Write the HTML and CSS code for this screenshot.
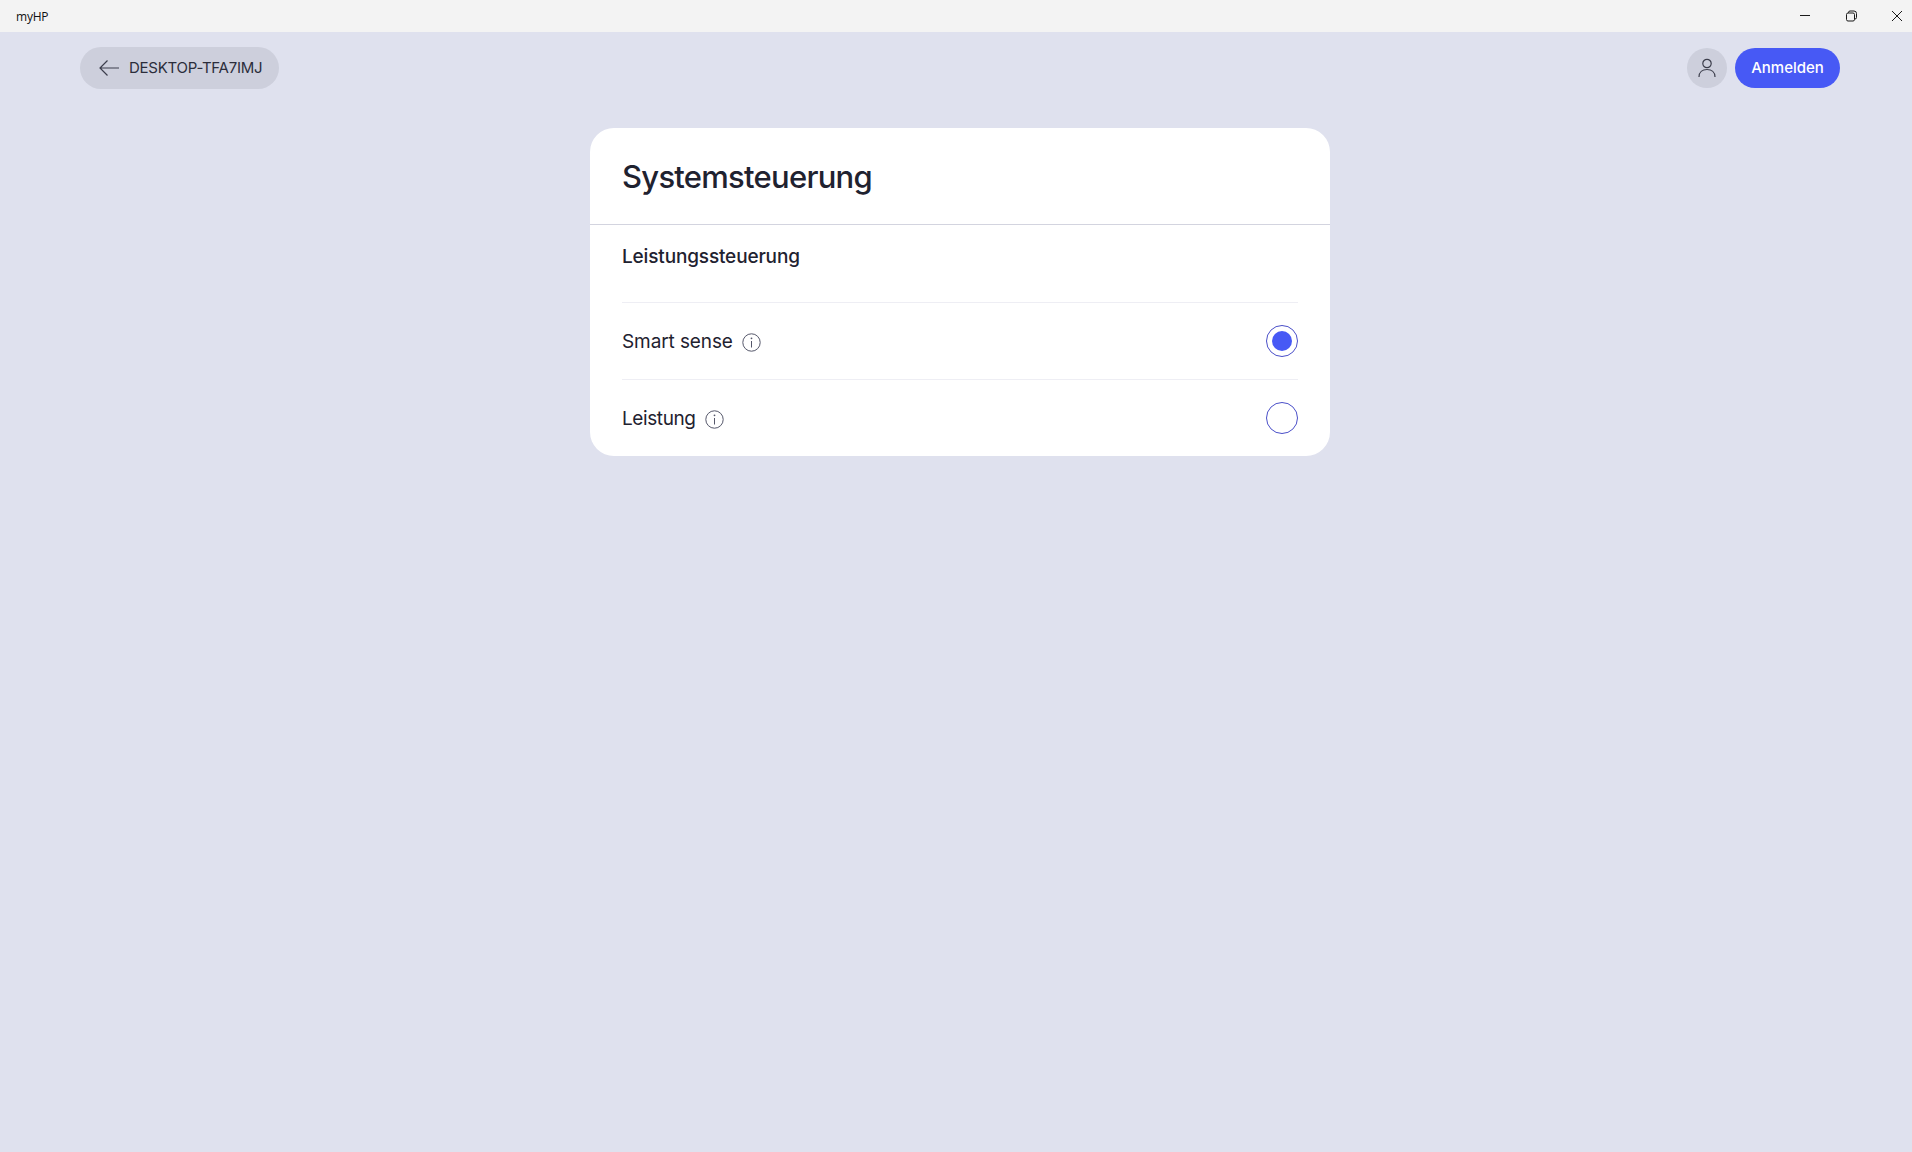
FILE: index.html
```html
<!DOCTYPE html>
<html lang="de">

<head>
    <meta charset="UTF-8">
    <title>myHP</title>
    <link rel="stylesheet" href="styles.css">
</head>

<body>

    <div class="titlebar">
        <span class="app-name">myHP</span>
        <div class="win-controls">
            <svg width="46" height="32" viewBox="0 0 46 32"><path d="M18 15.500h10" stroke="#1a1a1a" fill="none"/></svg>
            <svg width="46" height="32" viewBox="0 0 46 32"><path d="M18.500 14.500a1.500 1.500 0 0 1 1.500-1.500h5a1.500 1.500 0 0 1 1.500 1.500v5a1.500 1.500 0 0 1-1.500 1.500h-5a1.500 1.500 0 0 1-1.500-1.500z M20.500 13v-.5a1.500 1.500 0 0 1 1.500-1.500h4a2.500 2.500 0 0 1 2.500 2.500v4a1.500 1.500 0 0 1-1.500 1.500h-.5" stroke="#1a1a1a" fill="none"/></svg>
            <svg width="46" height="32" viewBox="0 0 46 32"><path d="M18 11l10 10M28 11l-10 10" stroke="#1a1a1a" fill="none"/></svg>
        </div>
    </div>

    <div class="topbar">
        <a class="back" href="#">
            <svg width="20" height="16" viewBox="0 0 20 16"><path d="M20 8H1M8.500 .5L1 8l7.500 7.500" stroke="#3c3e4c" stroke-width="1.200" fill="none"/></svg>
            <span class="back-text">DESKTOP-TFA7IMJ</span>
        </a>
        <div class="account">
            <span class="avatar">
                <svg width="20" height="20" viewBox="0 0 20 20"><circle cx="10" cy="5.500" r="4.200" stroke="#3c3e4c" stroke-width="1.200" fill="none"/><path d="M2 19c0-5 3.500-7.500 8-7.500s8 2.500 8 7.500" stroke="#3c3e4c" stroke-width="1.200" fill="none"/></svg>
            </span>
            <a class="login" href="#">Anmelden</a>
        </div>
    </div>

    <div class="card">
        <h1 class="card-title">Systemsteuerung</h1>
        <div class="card-body">
            <h2 class="section-title">Leistungssteuerung</h2>

            <div class="row">
                <div class="row-label">
                    <span>Smart sense</span>
                    <svg class="info" width="19" height="19" viewBox="0 0 19 19"><circle cx="9.500" cy="9.500" r="8.700" stroke="#55576a" fill="none"/><path d="M9.500 8v6.500" stroke="#55576a" fill="none"/><circle cx="9.500" cy="5.300" r=".9" fill="#55576a"/></svg>
                </div>
                <span class="radio checked"></span>
            </div>

            <div class="row">
                <div class="row-label">
                    <span class="tight">Leistung</span>
                    <svg class="info" width="19" height="19" viewBox="0 0 19 19"><circle cx="9.500" cy="9.500" r="8.700" stroke="#55576a" fill="none"/><path d="M9.500 8v6.500" stroke="#55576a" fill="none"/><circle cx="9.500" cy="5.300" r=".9" fill="#55576a"/></svg>
                </div>
                <span class="radio"></span>
            </div>
        </div>
    </div>

</body>

</html>
```

FILE: styles.css
```css
* {
    box-sizing: border-box;
}

html,
body {
    height: 100%;
}

body {
    margin: 0;
    overflow: hidden;
    background: #dfe1ee;
    color: #1f2230;
    font-family: Inter, "Liberation Sans", sans-serif;
}

a {
    text-decoration: none;
}

.titlebar {
    height: 32px;
    background: #f3f3f3;
    display: flex;
    justify-content: space-between;
    align-items: center;
    padding-left: 16px;
}

.app-name {
    font-family: "Open Sans", sans-serif;
    font-size: 12px;
    letter-spacing: -0.2px;
    color: #111;
}

.win-controls {
    display: flex;
    margin-right: -8px;
}

.topbar {
    display: flex;
    justify-content: space-between;
    align-items: center;
    padding: 15px 72px 0 80px;
}

.back {
    width: 199px;
    height: 42px;
    border-radius: 21px;
    background: #cdcfdc;
    display: flex;
    align-items: center;
    gap: 10px;
    padding-left: 19px;
    font-size: 15px;
    letter-spacing: -0.25px;
    color: #2b2d3b;
}

.back-text {
    padding-bottom: 2px;
}

.account {
    display: flex;
    gap: 8px;
}

.avatar {
    width: 40px;
    height: 40px;
    border-radius: 50%;
    background: #cdcfdc;
    display: flex;
    align-items: center;
    justify-content: center;
}

.login {
    width: 105px;
    height: 40px;
    padding-bottom: 2px;
    border-radius: 20px;
    background: #4759f5;
    color: #fff;
    font-size: 15px;
    font-weight: 500;
    display: flex;
    align-items: center;
    justify-content: center;
}

.card {
    width: 740px;
    height: 328px;
    margin: 39px 0 0 590px;
    background: #fff;
    border-radius: 24px;
    overflow: hidden;
}

.card-title {
    margin: 0;
    height: 97px;
    padding: 29px 32px 0;
    border-bottom: 1px solid #d3d4df;
    font-size: 31px;
    line-height: 40px;
    font-weight: 500;
    letter-spacing: -0.74px;
}

.card-body {
    padding: 0 32px;
}

.section-title {
    margin: 0;
    height: 77px;
    padding-top: 20px;
    font-size: 19px;
    line-height: 24px;
    font-weight: 500;
    letter-spacing: -0.15px;
}

.row {
    height: 77px;
    border-top: 1px solid #eeeef4;
    display: flex;
    justify-content: space-between;
    align-items: center;
}

.row-label {
    display: flex;
    align-items: center;
    gap: 9px;
    margin-top: 2px;
    font-size: 19px;
    line-height: 26px;
    letter-spacing: -0.1px;
}

.tight {
    letter-spacing: -0.4px;
}

.radio {
    width: 32px;
    height: 32px;
    border: 1px solid #4a4fc8;
    border-radius: 50%;
    display: flex;
    align-items: center;
    justify-content: center;
}

.radio.checked::after {
    content: "";
    width: 20px;
    height: 20px;
    border-radius: 50%;
    background: #4759f5;
}
```
